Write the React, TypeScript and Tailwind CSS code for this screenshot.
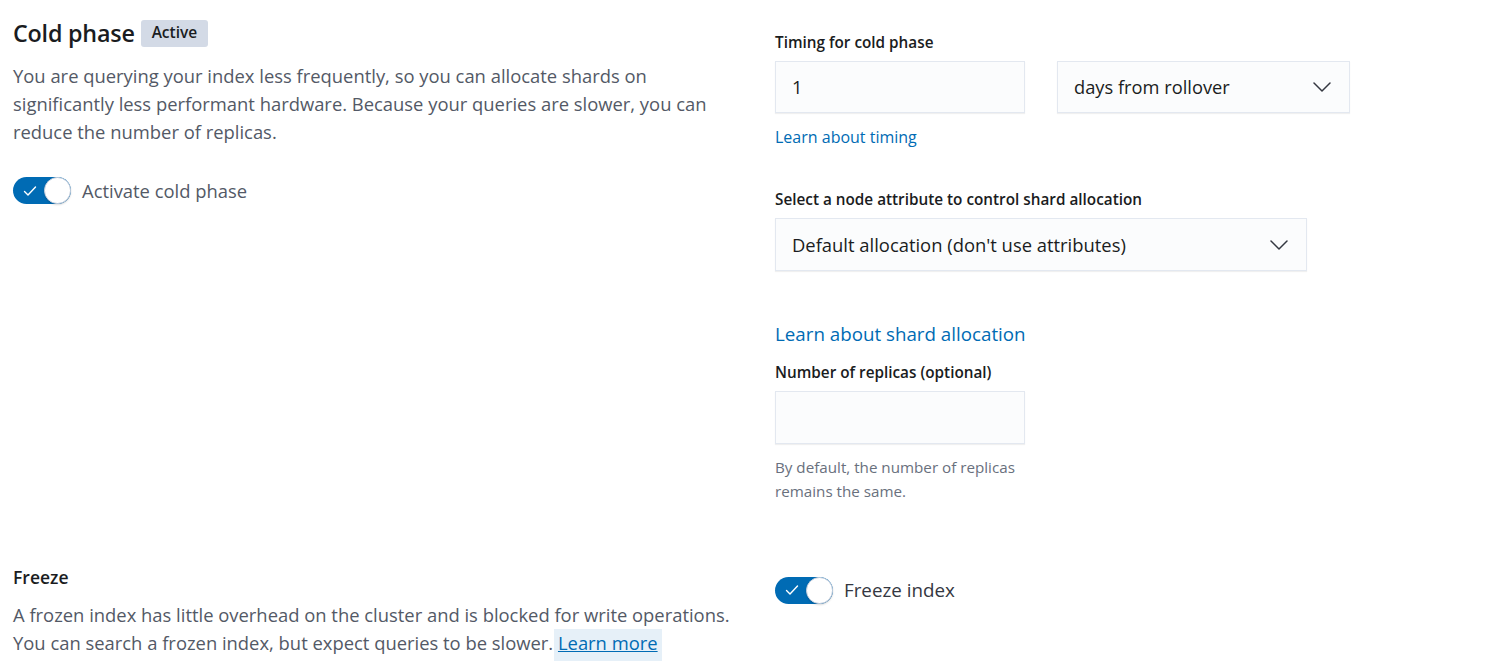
import React from "react";

const font = { fontFamily: '"Open Sans", "Noto Sans", sans-serif' };

function Check() {
  return (
    <svg width="14" height="12" viewBox="0 0 14 12" fill="none" className="text-white">
      <path d="M1.5 6.5 L5 10 L12.5 2" stroke="currentColor" strokeWidth="1.4" strokeLinecap="round" strokeLinejoin="round" />
    </svg>
  );
}

function Chevron() {
  return (
    <svg width="18" height="10" viewBox="0 0 18 10" fill="none" className="text-[#343741]">
      <path d="M1 1 L9 9 L17 1" stroke="currentColor" strokeWidth="1.5" strokeLinecap="round" strokeLinejoin="round" />
    </svg>
  );
}

function Toggle({ label, labelClass }: { label: string; labelClass: string }) {
  return (
    <div className="flex items-center gap-[11px]">
      <div className="relative w-[58px] h-[27px] rounded-full bg-[#006bb4] flex items-center">
        <span className="ml-[10px]">
          <Check />
        </span>
        <span className="absolute right-0 top-0 w-[27px] h-[27px] rounded-full bg-white border border-[#c9d1df] shadow-[0_1px_2px_rgba(0,0,0,0.15)]" />
      </div>
      <span className={labelClass}>{label}</span>
    </div>
  );
}

function FieldLabel({ children }: { children: React.ReactNode }) {
  return <div className="text-[15.3px] leading-[20px] font-semibold text-[#1a1c21]">{children}</div>;
}

const boxCls =
  "h-[52px] bg-[#fbfcfd] border border-[#e3e8f0] shadow-[0_1px_1px_rgba(0,0,0,0.06)] flex items-center";

export default function App() {
  return (
    <div className="w-[1500px] h-[661px] bg-white overflow-hidden pl-[13px]" style={font}>
      <div className="flex">
        {/* Left */}
        <div className="w-[762px] shrink-0 pt-[17px]">
          <div className="flex items-center gap-[6px]">
            <h2 className="text-[23.3px] leading-[32px] font-semibold text-[#1a1c21] tracking-[-0.2px]">Cold phase</h2>
            <span className="h-[27px] px-[11px] rounded-[3px] bg-[#d3dae6] text-[15.5px] font-semibold text-[#1a1c21] flex items-center">
              Active
            </span>
          </div>
          <p className="mt-[13px] w-[736px] text-[18.4px] leading-[28px] text-[#535966]">
            You are querying your index less frequently, so you can allocate shards on significantly less performant
            hardware. Because your queries are slower, you can reduce the number of replicas.
          </p>
          <div className="mt-[31px]">
            <Toggle label="Activate cold phase" labelClass="text-[18.4px] text-[#535966]" />
          </div>
        </div>

        {/* Right */}
        <div className="pt-[32px] w-[600px]">
          <FieldLabel>Timing for cold phase</FieldLabel>
          <div className="mt-[9px] flex gap-[32px]">
            <div className={`${boxCls} w-[250px] px-[16px] text-[18.3px] text-[#1a1c21]`}>1</div>
            <div className={`${boxCls} w-[293px] pl-[16px] pr-[18px] justify-between text-[18.3px] text-[#1a1c21]`}>
              <span>days from rollover</span>
              <Chevron />
            </div>
          </div>
          <div className="mt-[14px] text-[16px] leading-[20px] text-[#006bb4]">Learn about timing</div>

          <div className="mt-[42px]">
            <FieldLabel>Select a node attribute to control shard allocation</FieldLabel>
          </div>
          <div className={`${boxCls} mt-[9px] h-[53px] w-[532px] pl-[16px] pr-[18px] justify-between text-[18.4px] text-[#1a1c21]`}>
            <span>Default allocation (don't use attributes)</span>
            <Chevron />
          </div>

          <div className="mt-[51px] text-[18.75px] leading-[24px] text-[#006bb4]">Learn about shard allocation</div>

          <div className="mt-[16px]">
            <FieldLabel>Number of replicas (optional)</FieldLabel>
          </div>
          <div className={`${boxCls} mt-[9px] h-[53px] w-[250px]`} />
          <p className="mt-[11px] w-[260px] text-[15.2px] leading-[24px] text-[#69707d]">
            By default, the number of replicas remains the same.
          </p>
        </div>
      </div>

      {/* Freeze */}
      <div className="flex mt-[62px]">
        <div className="w-[762px] shrink-0">
          <div className="text-[17.5px] leading-[24px] font-semibold text-[#1a1c21]">Freeze</div>
          <p className="mt-[12px] w-[736px] text-[18.4px] leading-[28px] text-[#535966]">
            A frozen index has little overhead on the cluster and is blocked for write operations. You can search a
            frozen index, but expect queries to be slower.{" "}
            <a className="pt-[1px] pb-[7px] px-[4px] -mx-[4px] bg-[#e6f0f8] text-[#006bb4] underline">Learn more</a>
          </p>
        </div>
        <div className="pt-[11px]">
          <Toggle label="Freeze index" labelClass="text-[18.8px] text-[#343741]" />
        </div>
      </div>
    </div>
  );
}
